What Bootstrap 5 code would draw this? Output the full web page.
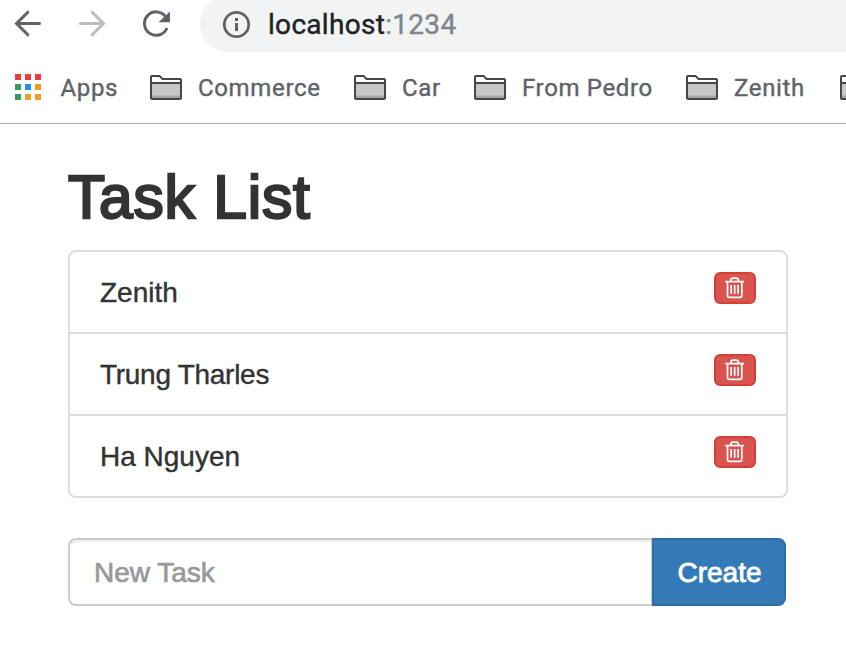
<!DOCTYPE html>
<html lang="en">
<head>
<meta charset="utf-8">
<meta name="viewport" content="width=device-width, initial-scale=1">
<title>Task List</title>
<link href="https://cdn.jsdelivr.net/npm/bootstrap@5.3.0/dist/css/bootstrap.min.css" rel="stylesheet">
<style>
body { font-family: "Liberation Sans", Arial, sans-serif; font-size: 28px; line-height: 42px; color: #333; overflow: hidden; }
svg { display: block; flex-shrink: 0; }
.browser { height: 124px; border-bottom: 1px solid #b2b2b4; font-family: Roboto, sans-serif; -webkit-text-stroke: .4px; }
.toolbar { height: 52px; }
.toolbar-icons { width: 200px; padding: 0 28px 4px 12px; }
.address { border-radius: 28px 0 0 28px; background: #f1f3f4; padding-left: 21px; color: #202124; font-size: 28px; letter-spacing: .3px; height: 56px; margin-top: -4px; padding-top: 1px; }
.address-host { margin-left: 17px; }
.address-port { color: #80868b; letter-spacing: .3px; }
.bookmarks { height: 71px; padding: 0 0 1px 15px; font-size: 24px; line-height: 38px; letter-spacing: .65px; color: #5f6368; }
.bookmark { flex-shrink: 0; gap: 16px; }
.bookmark span { padding-top: 1px; }
.bm-apps { gap: 19.5px; width: 135px; }
.bm-commerce { width: 204px; }
.bm-car { width: 120px; }
.bm-pedro { width: 212px; }
.bm-zenith { width: 154px; }
.page { margin-left: 68px; width: 720px; padding-top: 40px; }
.page h1 { font-size: 60.5px; line-height: 66px; font-weight: 400; -webkit-text-stroke: 2.4px; letter-spacing: .8px; margin-bottom: 20px; }
.task-list { --bs-list-group-border-color: #ddd; --bs-list-group-border-width: 2px; --bs-list-group-border-radius: 8px; --bs-list-group-color: #333; --bs-list-group-item-padding-x: 30px; --bs-list-group-item-padding-y: 20px; margin-bottom: 40px; -webkit-text-stroke: .4px; }
.task-list .list-group-item { height: 82px; }
.task-list .list-group-item:first-child { height: 84px; }
.task-wide { letter-spacing: -.28px; }
.btn-trash { --bs-btn-bg: #d9534f; --bs-btn-border-color: #d43f3a; --bs-btn-border-width: 2px; --bs-btn-border-radius: 6px; --bs-btn-padding-x: 0; --bs-btn-padding-y: 0; width: 42px; height: 32px; }
.new-task { width: 718px; height: 68px; }
.new-task .form-control { border: 2px solid #ccc; border-radius: 8px; padding: 1px 24px 0; font-size: 28px; box-shadow: inset 0 2px 2px rgba(0,0,0,.075); -webkit-text-stroke: .7px; }
.new-task .form-control::placeholder { color: #999; }
.btn-create { --bs-btn-bg: #337ab7; --bs-btn-border-color: #2e6da4; --bs-btn-border-width: 2px; --bs-btn-border-radius: 8px; --bs-btn-font-size: 28px; --bs-btn-padding-x: 0; --bs-btn-padding-y: 0; width: 134px; padding: 2px 0 0 1px; -webkit-text-stroke: .8px #fff; }
</style>
</head>
<body class="bg-white">
<svg class="d-none" aria-hidden="true">
  <symbol id="folder" viewBox="0 0 32 26">
    <path d="M1 8V3q0-2 2-2h6.500l3.500 3.500H29q2 0 2 2V8" fill="#fff"/>
    <path d="M1 8h30v17H1z" fill="#c8c8c8"/>
    <path d="M1 21.500h30V25H1z" fill="#a6a6a6"/>
    <path d="M1 9h30M2 2h7.500l3 3H30q1 0 1 1v18q0 1-1 1H2q-1 0-1-1V3q0-1 1-1z" fill="none" stroke="#474747" stroke-width="2"/>
  </symbol>
  <symbol id="trash" viewBox="0 0 20 22">
    <g fill="none" stroke="#fff" stroke-width="1.700">
      <path d="M.3 4.600h18.700"/>
      <path d="M5.700 4.500q.1-3.300 2.300-3.300h3.300q2.200 0 2.300 3.300M2.500 5v13.500q0 1.800 1.800 1.800h10.700q1.800 0 1.800-1.800V5"/>
      <path d="M6.200 8v8.800M9.650 8v8.800M13.100 8v8.800"/>
    </g>
  </symbol>
</svg>

<header class="browser overflow-hidden">
  <div class="toolbar d-flex">
    <div class="toolbar-icons d-flex align-items-center justify-content-between flex-shrink-0">
      <svg width="32" height="32" viewBox="0 0 32 32" fill="none" stroke="#5f6368" stroke-width="3" stroke-linecap="round"><path d="M27.500 15.500H5M15.800 4.200l-11.300 11.300 11.300 11.300"/></svg>
      <svg width="32" height="32" viewBox="0 0 32 32" fill="none" stroke="#babcbe" stroke-width="3" stroke-linecap="round"><path d="M4.500 15.500H27M16.200 4.200l11.300 11.300-11.300 11.300"/></svg>
      <svg width="32" height="32" viewBox="0 0 32 32"><path d="M27 20A11.700 11.700 0 1 1 25.500 8.500" fill="none" stroke="#5f6368" stroke-width="3"/><path d="M30 3.500v10.700H18.500z" fill="#5f6368"/></svg>
    </div>
    <div class="address d-flex align-items-center flex-grow-1">
      <svg width="30" height="30" viewBox="0 0 30 30"><circle cx="15.500" cy="14.500" r="12.200" fill="none" stroke="#5f6368" stroke-width="2.800"/><path d="M14 8h3v3h-3zM14 13h3v8h-3z" fill="#5f6368"/></svg>
      <span class="address-host">localhost</span><span class="address-port">:1234</span>
    </div>
  </div>
  <nav class="bookmarks d-flex align-items-center">
    <div class="bookmark bm-apps d-flex align-items-center">
      <svg width="26" height="26" viewBox="0 0 26 26"><path d="M0 0h6v6H0zM10 0h6v6h-6zM20 0h6v6h-6z" fill="#f43b3b"/><path d="M0 10h6v6H0zM0 20h6v6H0z" fill="#349c5b"/><path d="M10 10h6v6h-6z" fill="#258ef5"/><path d="M20 10h6v6h-6zM10 20h6v6h-6zM20 20h6v6h-6z" fill="#f1a025"/></svg>
      <span>Apps</span>
    </div>
    <div class="bookmark bm-commerce d-flex align-items-center"><svg width="32" height="26"><use href="#folder"/></svg><span>Commerce</span></div>
    <div class="bookmark bm-car d-flex align-items-center"><svg width="32" height="26"><use href="#folder"/></svg><span>Car</span></div>
    <div class="bookmark bm-pedro d-flex align-items-center"><svg width="32" height="26"><use href="#folder"/></svg><span>From Pedro</span></div>
    <div class="bookmark bm-zenith d-flex align-items-center"><svg width="32" height="26"><use href="#folder"/></svg><span>Zenith</span></div>
    <div class="bookmark d-flex align-items-center"><svg width="32" height="26"><use href="#folder"/></svg></div>
  </nav>
</header>

<main class="page">
  <h1>Task List</h1>
  <ul class="list-group task-list">
    <li class="list-group-item d-flex justify-content-between align-items-start"><span>Zenith</span><button class="btn btn-danger btn-trash d-flex align-items-center justify-content-center" aria-label="Delete"><svg width="20" height="22"><use href="#trash"/></svg></button></li>
    <li class="list-group-item d-flex justify-content-between align-items-start"><span class="task-wide">Trung Tharles</span><button class="btn btn-danger btn-trash d-flex align-items-center justify-content-center" aria-label="Delete"><svg width="20" height="22"><use href="#trash"/></svg></button></li>
    <li class="list-group-item d-flex justify-content-between align-items-start"><span>Ha Nguyen</span><button class="btn btn-danger btn-trash d-flex align-items-center justify-content-center" aria-label="Delete"><svg width="20" height="22"><use href="#trash"/></svg></button></li>
  </ul>
  <div class="input-group new-task">
    <input type="text" class="form-control" placeholder="New Task" aria-label="New Task">
    <button class="btn btn-primary btn-create" type="button">Create</button>
  </div>
</main>
<script src="https://cdn.jsdelivr.net/npm/bootstrap@5.3.0/dist/js/bootstrap.bundle.min.js"></script>
</body>
</html>
